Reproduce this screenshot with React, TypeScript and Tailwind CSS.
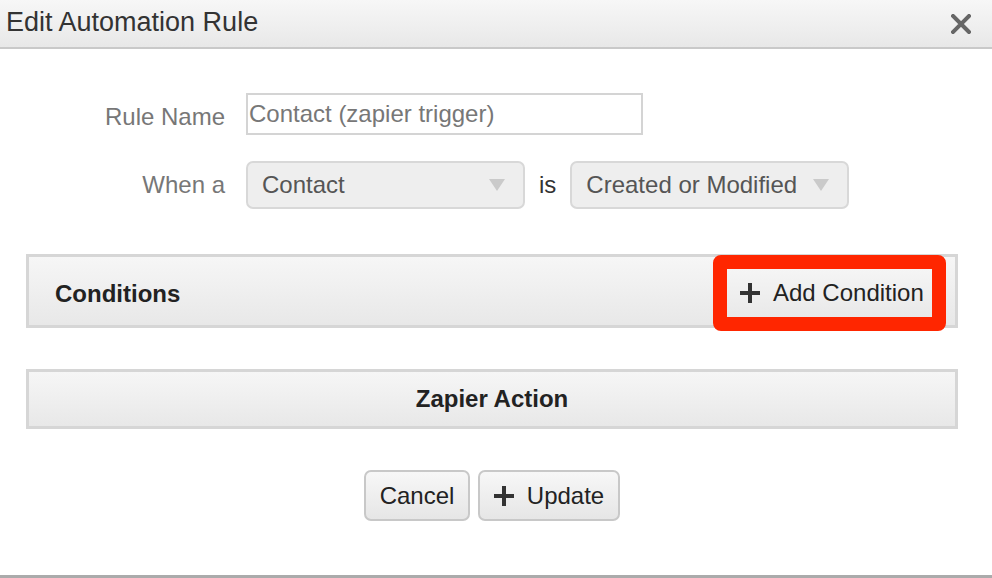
import React from "react";

const F = { fontFamily: '"Liberation Sans", Arial, Helvetica, sans-serif' };

function Plus({ size = 20 }: { size?: number }) {
  return (
    <svg width={size} height={size} viewBox="0 0 20 20" className="shrink-0">
      <rect x="8" y="0" width="4" height="20" fill="#333" />
      <rect x="0" y="8" width="20" height="4" fill="#333" />
    </svg>
  );
}

function Caret() {
  return (
    <svg width="16" height="12" viewBox="0 0 16 12" className="shrink-0">
      <polygon points="0,0 16,0 8,12" fill="#cacaca" />
    </svg>
  );
}

function Select({ value }: { value: string }) {
  return (
    <div className="flex h-[48px] w-[279px] items-center justify-between whitespace-nowrap rounded-[7px] border-2 border-[#d8d8d8] bg-[#eeeeee] pl-[14px] pr-[18px] text-[24px] text-[#555]">
      <span>{value}</span>
      <Caret />
    </div>
  );
}

export default function App() {
  return (
    <div className="relative flex h-[578px] w-[992px] flex-col overflow-hidden whitespace-nowrap bg-white text-[#333]" style={F}>
      <div className="flex h-[49px] shrink-0 items-center justify-between border-b-2 border-[#c9c9c9] bg-gradient-to-b from-[#f7f7f7] to-[#e8e8e8] pl-[6px] pr-[21px]">
        <span className="-mt-[3px] text-[27px] leading-none text-[#333]">Edit Automation Rule</span>
        <svg width="20" height="20" viewBox="0 0 20 20">
          <path d="M2 2 L18 18 M18 2 L2 18" stroke="#666" strokeWidth="4" strokeLinecap="square" />
        </svg>
      </div>

      <div className="flex flex-1 flex-col pl-[26px] pr-[34px] pt-[44px]">
        <div className="flex h-[42px] items-center">
          <div className="mt-[6px] w-[199px] text-right text-[24px] text-[#777]">Rule Name</div>
          <div className="ml-[21px] flex h-[42px] w-[397px] items-center border-2 border-[#d4d4d4] bg-white pl-[1px] text-[24px] text-[#777]">
            Contact (zapier trigger)
          </div>
        </div>

        <div className="mt-[26px] flex h-[48px] items-center">
          <div className="w-[199px] text-right text-[24px] text-[#777]">When a</div>
          <div className="ml-[21px]">
            <Select value="Contact" />
          </div>
          <span className="mx-[14px] text-[24px] text-[#333]">is</span>
          <Select value="Created or Modified" />
        </div>

        <div className="relative mt-[45px] flex h-[74px] items-center justify-between border-[3px] border-[#d6d6d6] bg-gradient-to-b from-[#f6f6f6] to-[#e8e8e8] pl-[26px] pr-[22px]">
          <span className="mt-[5px] text-[24px] font-bold text-[#222]">Conditions</span>
          <div className="relative mt-[3px] flex h-[47px] w-[206px] items-center gap-[13px] bg-gradient-to-b from-[#f5f5f5] to-[#e9e9e9] pl-[13px] text-[24px] text-[#222]">
            <Plus />
            <span>Add Condition</span>
            <div className="pointer-events-none absolute -left-[14px] -top-[14px] -right-[13px] -bottom-[15px] rounded-[8px] border-[14px] border-[#ff2600]" />
          </div>
        </div>

        <div className="mt-[41px] flex h-[60px] items-center justify-center border-[3px] border-[#d6d6d6] bg-gradient-to-b from-[#f6f6f6] to-[#e8e8e8]">
          <span className="text-[24px] font-bold text-[#222]">Zapier Action</span>
        </div>

        <div className="mt-[41px] flex justify-center gap-[8px]">
          <div className="flex h-[51px] w-[106px] items-center justify-center rounded-[7px] border-2 border-[#c8c8c8] bg-gradient-to-b from-[#f7f7f7] to-[#e6e6e6] text-[24px] text-[#222]">
            Cancel
          </div>
          <div className="flex h-[51px] w-[142px] items-center justify-center gap-[13px] rounded-[7px] border-2 border-[#c8c8c8] bg-gradient-to-b from-[#f7f7f7] to-[#e6e6e6] text-[24px] text-[#222]">
            <Plus />
            <span>Update</span>
          </div>
        </div>
      </div>

      <div className="h-[3px] shrink-0 bg-[#ababab]" />
    </div>
  );
}
